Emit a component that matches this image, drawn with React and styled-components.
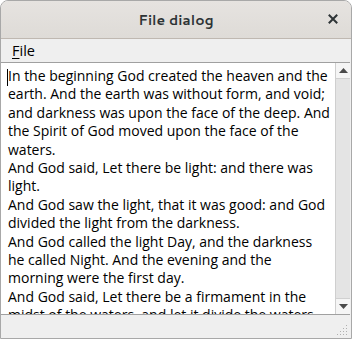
import styled, { createGlobalStyle } from "styled-components";

const GlobalStyle = createGlobalStyle`
  html, body {
    margin: 0;
    padding: 0;
    background: #ffffff;
  }
  body {
    font-family: "Open Sans", "Noto Sans", sans-serif;
  }
`;

const TEXT = [
  "In the beginning God created the heaven and the earth. And the earth was without form, and void; and darkness was upon the face of the deep. And the Spirit of God moved upon the face of the waters.",
  "And God said, Let there be light: and there was light.",
  "And God saw the light, that it was good: and God divided the light from the darkness.",
  "And God called the light Day, and the darkness he called Night. And the evening and the morning were the first day.",
  "And God said, Let there be a firmament in the midst of the waters, and let it divide the waters from the waters.",
];

const App = () => {
  return (
    <>
      <GlobalStyle />
      <Window>
        <TitleBar>
          <Title>File dialog</Title>
          <CloseButton>
            <svg width="10" height="10" viewBox="0 0 10 10">
              <path d="M1.5 1.5 L8.5 8.5 M8.5 1.5 L1.5 8.5" stroke="#2e3436" strokeWidth="2" strokeLinecap="square" />
            </svg>
          </CloseButton>
        </TitleBar>

        <MenuBar>
          <MenuItem>
            <u>F</u>ile
          </MenuItem>
        </MenuBar>

        <EditArea>
          <TextBox>
            <Caret />
            {TEXT.map((p, i) => (
              <Para key={i}>{p}</Para>
            ))}
          </TextBox>
          <ScrollBar>
            <ArrowButton>
              <svg width="9" height="5" viewBox="0 0 9 5">
                <path d="M0 5 L4.5 0 L9 5 Z" fill="#4a4a4a" />
              </svg>
            </ArrowButton>
            <Track />
            <ArrowButton>
              <svg width="9" height="5" viewBox="0 0 9 5">
                <path d="M0 0 L4.5 5 L9 0 Z" fill="#4a4a4a" />
              </svg>
            </ArrowButton>
          </ScrollBar>
        </EditArea>

        <StatusBar>
          <Grip>
            <svg width="12" height="12" viewBox="0 0 12 12">
              {[
                [10, 2],
                [10, 5], [7, 5],
                [10, 8], [7, 8], [4, 8],
                [10, 11], [7, 11], [4, 11], [1, 11],
              ].map(([x, y], i) => (
                <rect key={i} x={x - 1} y={y - 1} width="1" height="1" fill="#b0b0b0" />
              ))}
            </svg>
          </Grip>
        </StatusBar>
      </Window>
    </>
  );
};

export default App;

const Window = styled.div`
  width: 352px;
  height: 339px;
  box-sizing: border-box;
  border: 1px solid #a8a8a8;
  border-radius: 8px 8px 0 0;
  overflow: hidden;
  display: flex;
  flex-direction: column;
  background: #efefef;
`;

const TitleBar = styled.div`
  height: 37px;
  flex: none;
  position: relative;
  display: flex;
  align-items: center;
  justify-content: center;
  background: linear-gradient(#e6e3e0, #dedbd7);
  border-bottom: 1px solid #bfb8b1;
`;

const Title = styled.div`
  font-family: "Cantarell", "Noto Sans", "Open Sans", sans-serif;
  font-weight: 700;
  font-size: 14px;
  color: #2e3436;
  margin-top: 1px;
`;

const CloseButton = styled.div`
  position: absolute;
  right: 13px;
  top: 13px;
  width: 10px;
  height: 10px;
  display: flex;
`;

const MenuBar = styled.div`
  height: 23px;
  flex: none;
  display: flex;
  align-items: center;
  padding-left: 11px;
  background: #efefef;
`;

const MenuItem = styled.div`
  font-family: "Open Sans", "Noto Sans", sans-serif;
  font-size: 14.5px;
  color: #000;
  u {
    text-decoration-thickness: 1px;
    text-underline-offset: 2px;
  }
`;

const EditArea = styled.div`
  flex: 1;
  display: flex;
  border-top: 1px solid #a0a0a0;
  border-bottom: 1px solid #a0a0a0;
  margin: 0 1px 0 0;
  background: #fff;
  min-height: 0;
`;

const TextBox = styled.div`
  flex: 1;
  position: relative;
  overflow: hidden;
  padding: 4px 5px 0 7px;
  font-family: "Open Sans", "Noto Sans", sans-serif;
  font-size: 14px;
  line-height: 18.4px;
  color: #000;
  background: #fff;
`;

const Caret = styled.span`
  position: absolute;
  left: 6px;
  top: 6px;
  width: 1px;
  height: 17px;
  background: #000;
`;

const Para = styled.div`
  margin: 0;
`;

const ScrollBar = styled.div`
  width: 14px;
  flex: none;
  display: flex;
  flex-direction: column;
  border-left: 1px solid #cfcfcf;
  background: #e6e6e6;
`;

const ArrowButton = styled.div`
  height: 15px;
  flex: none;
  display: flex;
  align-items: center;
  justify-content: center;
  background: #f5f5f5;
  border-bottom: 1px solid #d0d0d0;
  &:last-child {
    border-bottom: none;
    border-top: 1px solid #d0d0d0;
  }
`;

const Track = styled.div`
  flex: 1;
  background: #e4e4e4;
`;

const StatusBar = styled.div`
  height: 23px;
  flex: none;
  display: flex;
  justify-content: flex-end;
  align-items: flex-end;
  background: #efefef;
`;

const Grip = styled.div`
  width: 12px;
  height: 12px;
  margin: 0 2px 2px 0;
  display: flex;
`;
